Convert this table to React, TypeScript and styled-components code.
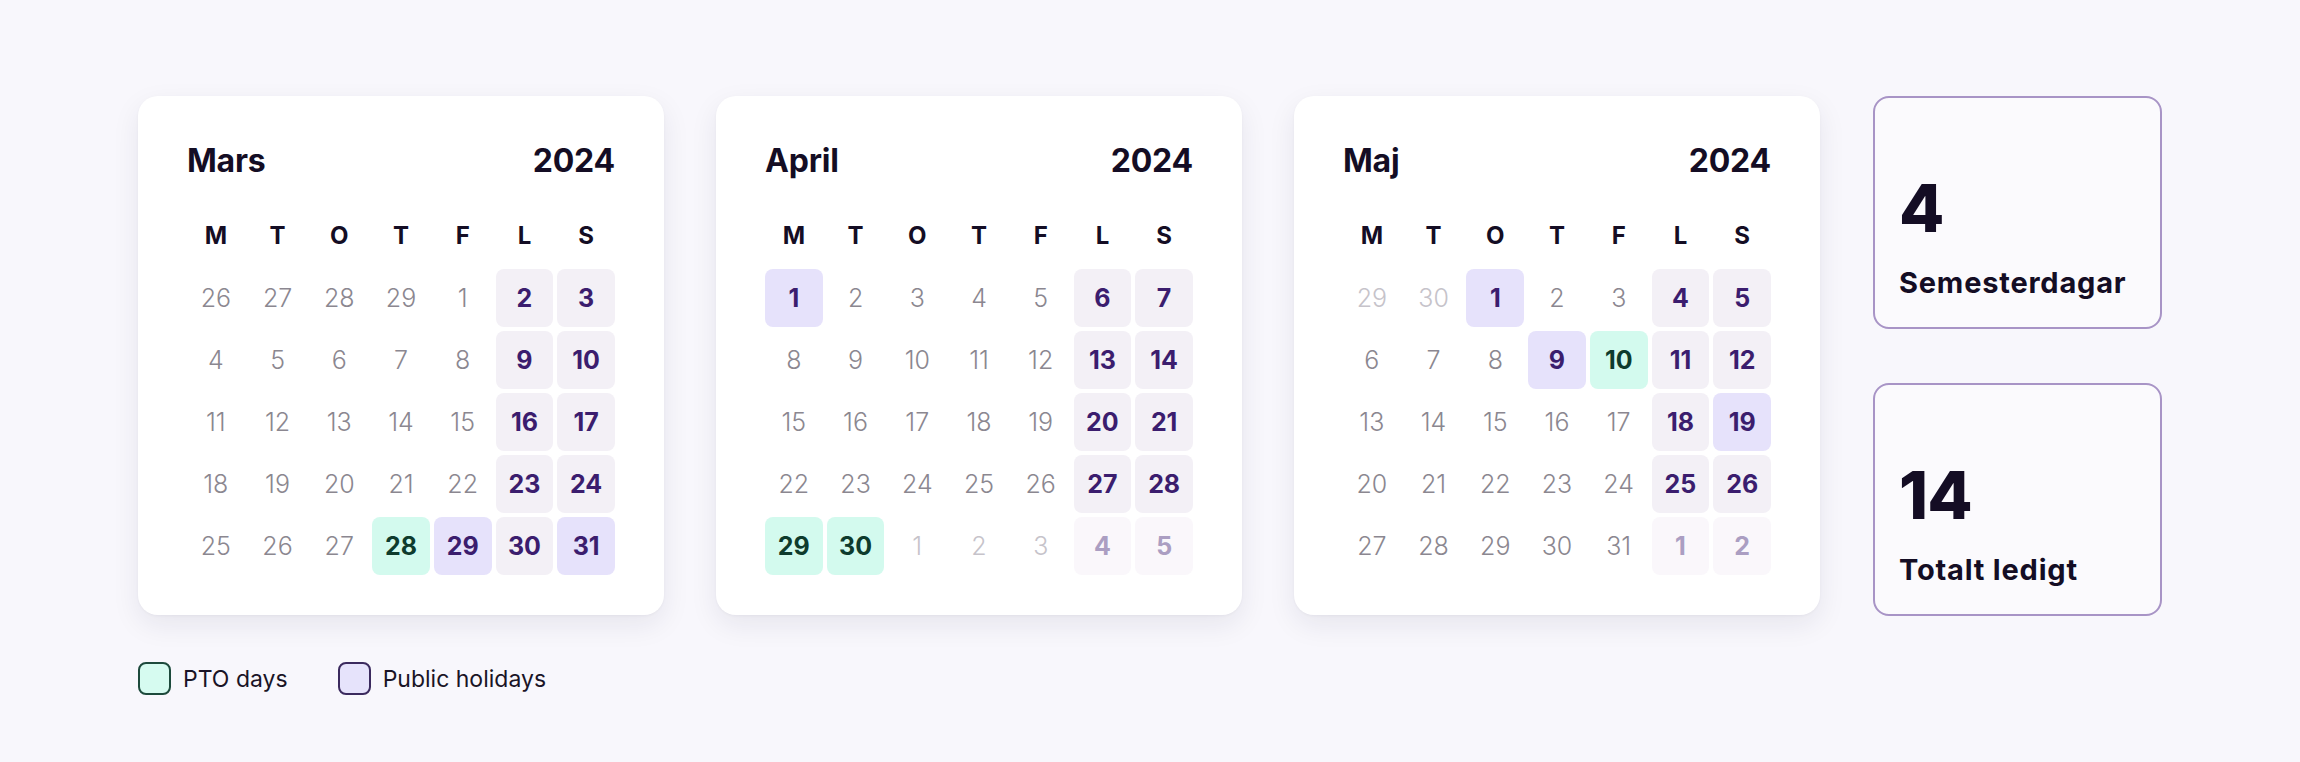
import React from "react";
import styled, { createGlobalStyle, css } from "styled-components";

const GlobalStyle = createGlobalStyle`
  html, body {
    margin: 0;
    padding: 0;
    background: #f8f7fc;
  }
  body {
    font-family: Inter, "Noto Sans", sans-serif;
    color: #140d24;
  }
`;

type Kind = "day" | "weekend" | "holiday" | "pto";

interface Day {
  d: number;
  kind: Kind;
  muted?: boolean;
}

interface Month {
  name: string;
  year: number;
  days: Day[];
}

const WEEKDAYS = ["M", "T", "O", "T", "F", "L", "S"];

// build a 5x7 grid; first/last are the index range of the month itself
const build = (
  nums: number[],
  first: number,
  last: number,
  special: Record<number, Kind>,
  dimOutside: boolean
): Day[] =>
  nums.map((d, i) => {
    const inside = i >= first && i <= last;
    let kind: Kind = i % 7 >= 5 ? "weekend" : "day";
    if (inside && special[d]) kind = special[d];
    return { d, kind, muted: !inside && dimOutside };
  });

const range = (a: number, b: number) =>
  Array.from({ length: b - a + 1 }, (_, i) => a + i);

const months: Month[] = [
  {
    name: "Mars",
    year: 2024,
    days: build(
      [26, 27, 28, 29, ...range(1, 31)],
      4,
      34,
      { 28: "pto", 29: "holiday", 31: "holiday" },
      false
    ),
  },
  {
    name: "April",
    year: 2024,
    days: build(
      [...range(1, 30), ...range(1, 5)],
      0,
      29,
      { 1: "holiday", 29: "pto", 30: "pto" },
      true
    ),
  },
  {
    name: "Maj",
    year: 2024,
    days: build(
      [29, 30, ...range(1, 31), 1, 2],
      2,
      32,
      { 1: "holiday", 9: "holiday", 10: "pto", 19: "holiday" },
      true
    ),
  },
];

const Page = styled.div`
  padding: 96px 0 0 138px;
`;

const Board = styled.div`
  display: flex;
  align-items: flex-start;
  gap: 52px;
`;

const Card = styled.div`
  width: 526px;
  box-sizing: border-box;
  padding: 48px 49px 40px;
  background: #ffffff;
  border-radius: 20px;
  box-shadow: 0 10px 28px rgba(30, 20, 60, 0.08), 0 1px 3px rgba(30, 20, 60, 0.04);
`;

const CardHead = styled.div`
  display: flex;
  justify-content: space-between;
  align-items: center;
  height: 32px;
  font-size: 32px;
  font-weight: 700;
  letter-spacing: -0.2px;
  color: #140d24;
  margin-bottom: 40px;
`;

const Grid = styled.div`
  display: grid;
  grid-template-columns: repeat(7, 1fr);
  column-gap: 4px;
  row-gap: 4px;
`;

const WeekRow = styled(Grid)`
  height: 38px;
  margin-bottom: 15px;
`;

const WeekDay = styled.div`
  display: flex;
  align-items: center;
  justify-content: center;
  font-size: 24px;
  font-weight: 700;
  color: #140d24;
`;

const cellLook = {
  day: css`
    background: transparent;
    color: #8b8790;
    font-weight: 300;
  `,
  weekend: css`
    background: #f3f0f6;
    color: #3b1d6e;
    font-weight: 700;
  `,
  holiday: css`
    background: #e6e2fb;
    color: #3b1d6e;
    font-weight: 700;
  `,
  pto: css`
    background: #d3faee;
    color: #0e3b2d;
    font-weight: 700;
  `,
};

const Cell = styled.div<{ $kind: Kind; $muted?: boolean }>`
  height: 58px;
  border-radius: 8px;
  display: flex;
  align-items: center;
  justify-content: center;
  font-size: 25px;
  ${({ $kind }) => cellLook[$kind]}
  ${({ $muted, $kind }) =>
    $muted &&
    ($kind === "weekend"
      ? css`
          background: #faf7fb;
          color: #ab9ec2;
        `
      : css`
          color: #c6c3ca;
        `)}
`;

const Stats = styled.div`
  display: flex;
  flex-direction: column;
  gap: 54px;
  margin-left: 1px;
`;

const StatBox = styled.div`
  width: 289px;
  height: 233px;
  box-sizing: border-box;
  border: 2px solid #a894c6;
  border-radius: 16px;
  background: #fbfafd;
  padding: 0 24px 28px;
  display: flex;
  flex-direction: column;
  justify-content: flex-end;
`;

const StatNum = styled.div`
  font-size: 66px;
  font-weight: 800;
  line-height: 1;
  letter-spacing: -1px;
  color: #140d24;
  margin-bottom: 26px;
`;

const StatLabel = styled.div`
  font-size: 29px;
  font-weight: 700;
  line-height: 32px;
  letter-spacing: 0.8px;
  color: #140d24;
`;

const Legend = styled.div`
  display: flex;
  align-items: center;
  margin-top: 46px;
`;

const LegendItem = styled.div`
  display: flex;
  align-items: center;
  gap: 12px;
  margin-right: 50px;
  font-size: 23px;
  color: #1a1426;
`;

const Swatch = styled.span<{ $fill: string; $line: string }>`
  width: 33px;
  height: 33px;
  box-sizing: border-box;
  border-radius: 8px;
  border: 2px solid ${({ $line }) => $line};
  background: ${({ $fill }) => $fill};
`;

function MonthCard({ month }: { month: Month }) {
  return (
    <Card>
      <CardHead>
        <span>{month.name}</span>
        <span>{month.year}</span>
      </CardHead>
      <WeekRow>
        {WEEKDAYS.map((w, i) => (
          <WeekDay key={i}>{w}</WeekDay>
        ))}
      </WeekRow>
      <Grid>
        {month.days.map((day, i) => (
          <Cell key={i} $kind={day.kind} $muted={day.muted}>
            {day.d}
          </Cell>
        ))}
      </Grid>
    </Card>
  );
}

export default function App() {
  return (
    <>
      <GlobalStyle />
      <Page>
        <Board>
          {months.map((m) => (
            <MonthCard key={m.name} month={m} />
          ))}
          <Stats>
            <StatBox>
              <StatNum>4</StatNum>
              <StatLabel>Semesterdagar</StatLabel>
            </StatBox>
            <StatBox>
              <StatNum>14</StatNum>
              <StatLabel>Totalt ledigt</StatLabel>
            </StatBox>
          </Stats>
        </Board>
        <Legend>
          <LegendItem>
            <Swatch $fill="#d6fbf0" $line="#1d4a3c" />
            PTO days
          </LegendItem>
          <LegendItem>
            <Swatch $fill="#e6e3fb" $line="#3b2a5e" />
            Public holidays
          </LegendItem>
        </Legend>
      </Page>
    </>
  );
}
